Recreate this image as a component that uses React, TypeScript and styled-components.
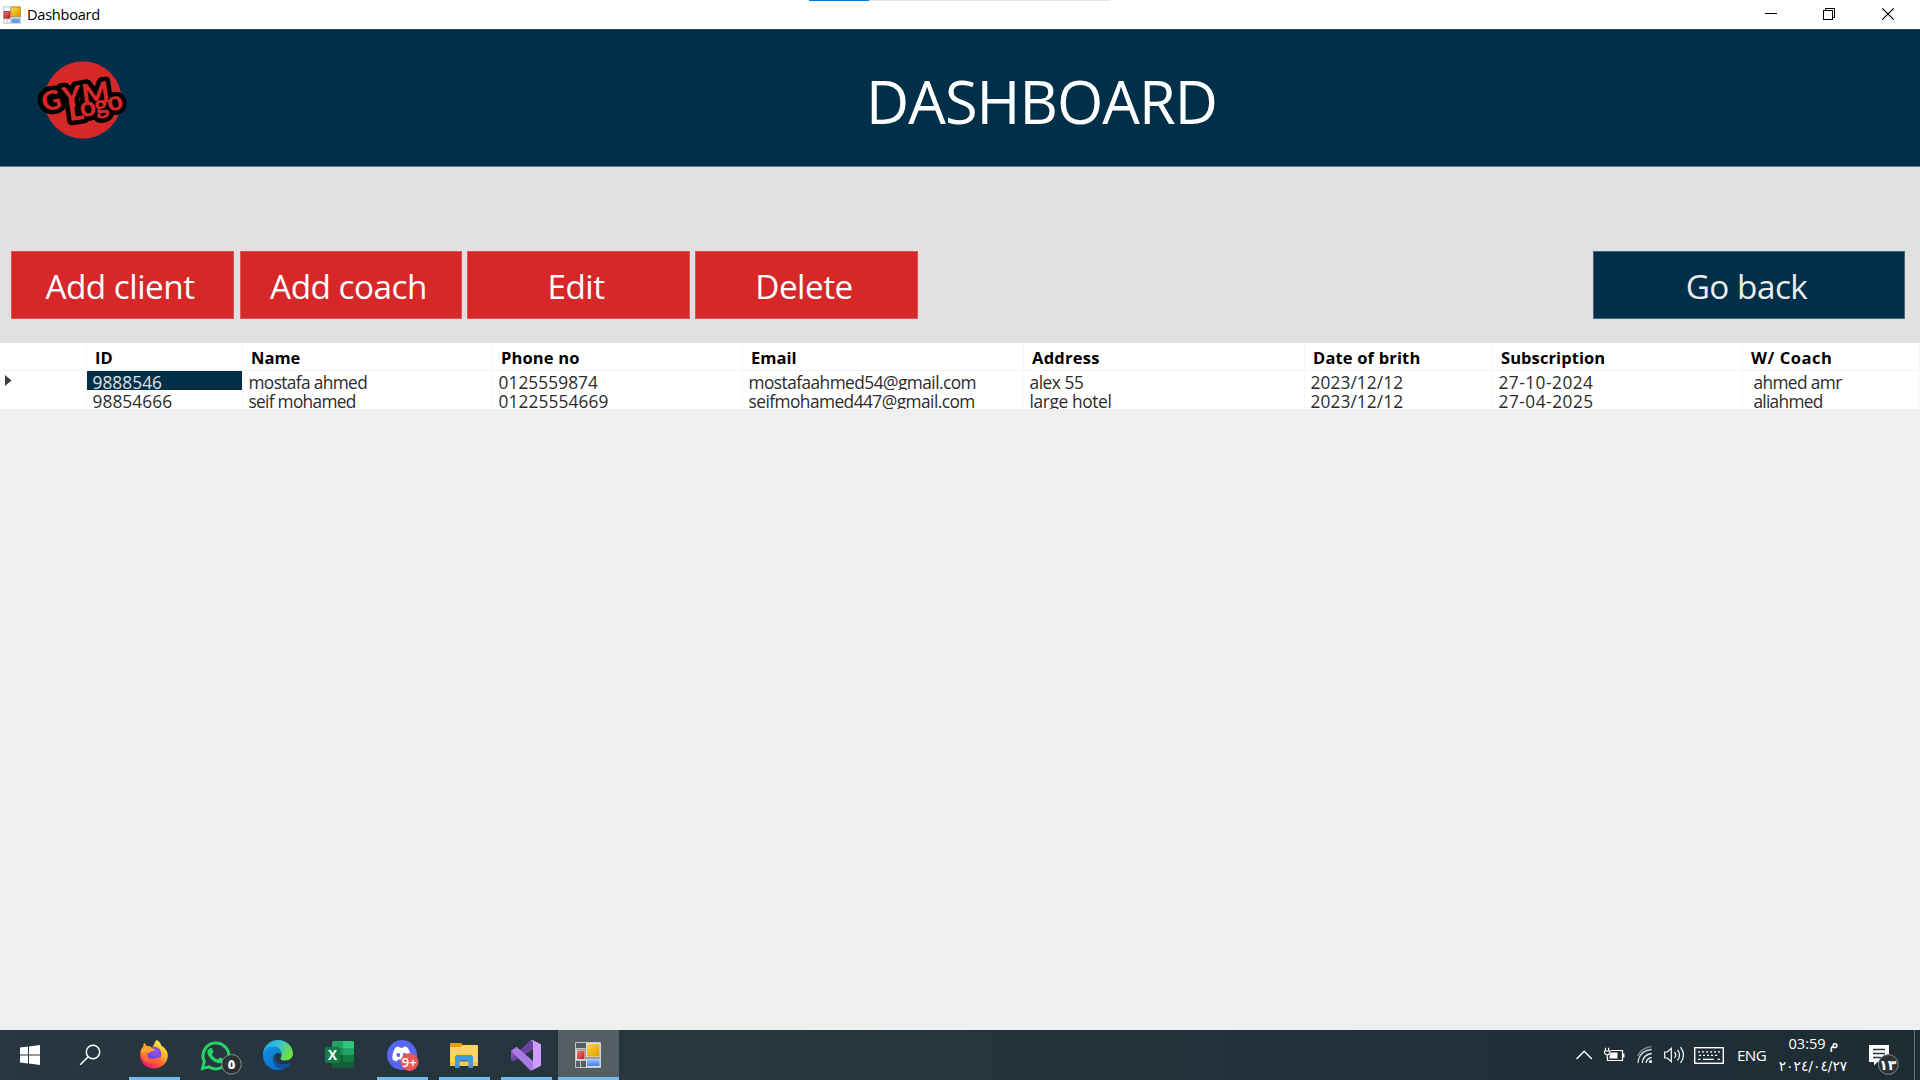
import React from "react";
import styled, { createGlobalStyle } from "styled-components";

const Global = createGlobalStyle`
  * { box-sizing: border-box; }
  body { margin: 0; background: #efefef; font-family: "Open Sans", "Noto Sans", "DejaVu Sans", sans-serif; overflow: hidden; }
  svg { display: block; flex: none; }
`;

const navy = "#003049";
const red = "#d62828";

const Screen = styled.div`
  width: 1920px;
  height: 1080px;
  display: flex;
  flex-direction: column;
  overflow: hidden;
`;

const TitleBar = styled.header`
  position: relative;
  height: 29px;
  flex: none;
  display: flex;
  align-items: center;
  padding-left: 3px;
  background: #fff;
`;

const WindowTitle = styled.span`
  flex: 1;
  margin-left: 6px;
  font-size: 14.6px;
  letter-spacing: -0.27px;
  line-height: 29px;
  color: #000;
`;

const LoadingStrip = styled.div`
  position: absolute;
  left: 809px;
  top: 0;
  width: 301px;
  height: 1px;
  background: linear-gradient(90deg, #0078d7 60px, #e5e5e5 60px);
`;

const Banner = styled.section`
  height: 138px;
  flex: none;
  display: flex;
  background: ${navy};
  border-top: 1px solid #1d4559;
  border-bottom: 1px solid #5d7e8d;
`;

const LogoBox = styled.div`
  width: 152px;
  padding-top: 20px;
`;

const BannerTitle = styled.h1`
  margin: 26px 0 0 714px;
  font-size: 59.5px;
  font-weight: 400;
  line-height: 90px;
  letter-spacing: -0.95px;
  color: #fff;
`;

const Toolbar = styled.section`
  height: 176px;
  flex: none;
  display: flex;
  align-items: flex-start;
  padding: 84px 15px 0 11px;
  background: #e0e0e0;
`;

const Action = styled.button<{ $w: number; $gap?: number; $tone?: string }>`
  width: ${(p) => p.$w}px;
  height: 68px;
  margin: 0 ${(p) => p.$gap ?? 0}px 0 0;
  padding: 2px 0 0;
  border: 1px solid ${(p) => (p.$tone === navy ? "#44687a" : "#d95656")};
  background: ${(p) => p.$tone ?? red};
  color: ${(p) => (p.$tone === navy ? "#ececec" : "#fff")};
  font-family: inherit;
  font-size: 33.3px;
  line-height: 64px;
  letter-spacing: -0.5px;
  text-indent: -5px;
`;

const Spacer = styled.div`
  flex: 1;
`;

const Grid = styled.div`
  flex: none;
  background: #fff;
`;

const columns = "87px 156px 250px 250px 281px 281px 188px 250px 177px";

const HeadRow = styled.div`
  display: grid;
  grid-template-columns: ${columns};
  height: 28px;
  border-bottom: 1px solid #f4f4f4;
`;

const HeadCell = styled.div<{ $ls: number }>`
  padding-left: 8px;
  border-right: 1px solid #f6f6f6;
  font-size: 16.5px;
  font-weight: 700;
  line-height: 29.6px;
  letter-spacing: ${(p) => p.$ls}px;
  white-space: nowrap;
  color: #000;
`;

const Row = styled.div`
  display: grid;
  grid-template-columns: ${columns};
  height: 19px;
`;

const Cell = styled.div<{ $selected?: boolean; $ls?: number; $pad?: number }>`
  height: 19px;
  padding-left: ${(p) => p.$pad ?? 6}px;
  border-right: 1px solid #f8f8f8;
  overflow: hidden;
  font-size: 17.3px;
  line-height: 24px;
  letter-spacing: ${(p) => p.$ls ?? 0}px;
  white-space: nowrap;
  background: ${(p) => (p.$selected ? navy : "#fff")};
  color: ${(p) => (p.$selected ? "#e2e2e2" : "#2b2b2b")};
`;

const Empty = styled.main`
  flex: 1;
  background: #efefef;
`;

const Taskbar = styled.footer`
  height: 50px;
  flex: none;
  display: flex;
  background: linear-gradient(90deg, #26373f 0%, #25353d 30%, #2a383c 34%, #22323a 65%, #1e2c34 100%);
`;

const Slot = styled.div<{ $w?: number; $open?: boolean; $active?: boolean }>`
  width: ${(p) => p.$w ?? 62}px;
  height: 50px;
  margin-left: ${(p) => (p.$active ? 1 : 0)}px;
  background: ${(p) => (p.$active ? "#545f64" : "transparent")};
  display: flex;
  flex-direction: column;
  &::after {
    content: "";
    height: 3px;
    flex: none;
    margin-top: -3px;
    margin-left: ${(p) => (p.$active ? 0 : 6)}px;
    width: ${(p) => (p.$active ? 61 : 51)}px;
    background: ${(p) => (p.$open || p.$active ? "#76b9ed" : "transparent")};
  }
`;

const AppSlotIcon = styled.div`
  height: 50px;
  padding: 12px 0 0 17px;
`;

const Tray = styled.div`
  width: 346px;
  margin-left: auto;
  display: flex;
`;

const TrayGap = styled.div`
  width: 18px;
`;

const Language = styled.span`
  width: 42px;
  margin-left: -1px;
  margin-right: 1px;
  font-size: 15.2px;
  line-height: 51px;
  letter-spacing: -0.6px;
  color: #fff;
`;

const Clock = styled.div`
  width: 66px;
  display: flex;
  flex-direction: column;
  align-items: center;
  color: #fff;
  white-space: nowrap;
`;

const Time = styled.span`
  margin-top: 2px;
  padding-left: 1px;
  font-size: 14.6px;
  line-height: 23px;
  letter-spacing: -0.75px;
`;

const DateText = styled.span`
  font-family: "DejaVu Sans", sans-serif;
  font-size: 13.8px;
  line-height: 22px;
  letter-spacing: -0.55px;
`;

const ShowDesktop = styled.div`
  width: 6px;
  margin-left: auto;
  border-left: 1px solid #6a757b;
`;

const FormIcon = ({ size }: { size: number }) => (
  <svg width={size} height={size} viewBox="0 0 26 26">
    <defs>
      <linearGradient id="fy" x1="0" y1="0" x2="1" y2="1">
        <stop offset="0" stopColor="#fbd75b" />
        <stop offset="0.6" stopColor="#eeb111" />
        <stop offset="1" stopColor="#d99a00" />
      </linearGradient>
      <linearGradient id="fb" x1="0" y1="0" x2="0" y2="1">
        <stop offset="0" stopColor="#9cc4ff" />
        <stop offset="1" stopColor="#3b7be6" />
      </linearGradient>
      <linearGradient id="fr" x1="0" y1="0" x2="1" y2="1">
        <stop offset="0" stopColor="#f08080" />
        <stop offset="1" stopColor="#c01818" />
      </linearGradient>
    </defs>
    {size < 20 ? <rect width="26" height="26" fill="#d3d3d3" /> : <path d="M.5 .5h25v25H.5zM.5 6.5h11M.5 18.500h11M5.500 18v7" fill="none" stroke="#c3c7c9" />}
    {size < 20 && <path d="M2 2h8v6H2zM2 20h3v4H2zM7 20h3v4H7z" fill="#fff" />}
    <rect x="11.500" y="1.500" width="13.500" height="13.500" fill="url(#fy)" stroke={size < 20 ? "#b98500" : "#dedede"} />
    <rect x="1.500" y="8" width="8.500" height="9.500" fill="url(#fr)" stroke={size < 20 ? "#9d1a1a" : "#dedede"} />
    <rect x="11.500" y="17" width="13.500" height="7.500" fill="url(#fb)" stroke="#dedede" />
  </svg>
);

const WindowControls = () => (
  <svg width="155" height="29" viewBox="0 0 155 29" fill="none" stroke="#000" shapeRendering="crispEdges">
    <path d="M0 13.500h12" />
    <path d="M58.500 10.500h9v9h-9zM60.500 10.500v-2h9v9h-2" />
    <path d="M117.300 8.300l11.400 11.400M128.700 8.300L117.300 19.700" shapeRendering="auto" strokeWidth="1.200" />
  </svg>
);

const logoLetters: [string, number, number, number, number][] = [
  ["G", 9.5, 57, 26.5, -14],
  ["Y", 29, 53.5, 29, -8],
  ["M", 48.5, 50.5, 29, -8],
  ["L", 34.5, 66, 30, -8],
  ["o", 46.5, 62.5, 28, -10],
  ["g", 61.5, 60, 26, -12],
  ["o", 74.5, 57, 27, -14],
];

const GymLogo = () => (
  <svg width="152" height="100" viewBox="-34 -5 152 100">
    <circle cx="49" cy="45" r="38.700" fill={red} />
    <g fontFamily="Lato, sans-serif" fontWeight="900" strokeLinejoin="round" transform="translate(.8 0)">
      <g fill="#000" stroke="#000" strokeWidth="9">
        {logoLetters.map(([c, x, y, s, r], i) => (
          <text key={i} fontSize={s} transform={`translate(${x} ${y}) rotate(${r})`}>{c}</text>
        ))}
      </g>
      <g fill={red}>
        {logoLetters.map(([c, x, y, s, r], i) => (
          <text key={i} fontSize={s} transform={`translate(${x} ${y}) rotate(${r})`}>{c}</text>
        ))}
      </g>
    </g>
  </svg>
);

const WindowsIcon = () => (
  <svg width="61" height="50" fill="#fff">
    <path d="M20 17.600l8-1.100v8H20zM29 16.400l11-1.500v9.600H29zM20 25.500h8v8l-8-1.100zM29 25.500h11V35l-11-1.400z" />
  </svg>
);

const SearchIcon = () => (
  <svg width="62" height="50" fill="none" stroke="#fff" strokeWidth="1.400">
    <circle cx="32" cy="22" r="6.700" />
    <path d="M27.200 26.800L19.200 34.800" />
  </svg>
);

const FirefoxIcon = () => (
  <svg width="62" height="50">
    <defs>
      <linearGradient id="ffa" x1="0.850" y1="0.050" x2="0.200" y2="0.950">
        <stop offset="0.050" stopColor="#fff04a" />
        <stop offset="0.350" stopColor="#ffb02a" />
        <stop offset="0.600" stopColor="#ff6a2c" />
        <stop offset="0.850" stopColor="#ff2f55" />
        <stop offset="1" stopColor="#e61587" />
      </linearGradient>
      <radialGradient id="ffb" cx="0.600" cy="0.300" r="0.700">
        <stop offset="0" stopColor="#a050f0" />
        <stop offset="1" stopColor="#5b46d0" />
      </radialGradient>
      <linearGradient id="ffc" x1="0" y1="0" x2="0" y2="1">
        <stop offset="0" stopColor="#ff9a2c" />
        <stop offset="1" stopColor="#ff4f3f" />
      </linearGradient>
    </defs>
    <path d="M34 10c2 1.200 4 3.500 4.300 5.800 2.600 1 6.500 5 6.500 9.500C44.800 33 38.700 38.600 31 38.600S17 32.500 17 25c0-4.500 1.500-7 3.400-8.300l.6-4 2.600 3.400c1.800-.2 3.400.2 4.700 1.100 1.600.1 2-.7 2.700-2.900.7-2 1.500-3.300 3-4.300z" fill="url(#ffa)" />
    <circle cx="31" cy="24" r="7.300" fill="url(#ffb)" />
    <path d="M18 22c1.500-3 4.500-4.500 7.500-3.500l-.7 4.600c-1.200 3 .7 6.200 4.400 6 3-.2 4.500-2 8-1.500-1.500 4-5 6-9 6-5.500 0-10-4.500-10.200-11.600z" fill="url(#ffc)" />
    <path d="M20.400 16.700l.6-4 2.600 3.400c2.500-.2 4.400.8 5.500 2.500 1.500.2 2.700.6 2.800 1.200 0 1.500-4.500 1-5.800 3.500-3.500-2.500-7-1.500-8.300.7.200-3 .8-5.800 2.600-7.300z" fill="#ffa52c" />
  </svg>
);

const WhatsAppIcon = () => (
  <svg width="62" height="50">
    <path d="M17.500 38.500l1.800-7A12.900 12.900 0 1 1 24 36.800z" fill="none" stroke="#25d366" strokeWidth="3" />
    <path d="M24.500 18.500c1.500-1 2.600-.5 3 .7l1 2.600c.2.700-1.700 2-1.500 2.600 1.200 2.400 3 4 5.600 5 .7.200 1.700-2.100 2.500-1.800l3 1.500c.8.500.2 2.300-.8 3.200-1.700 1.500-4.300 1-7-.3-4-2-7.400-6-7.900-9-.2-1.800.7-3.500 2.100-4.500z" fill="#25d366" />
    <circle cx="46.500" cy="34.300" r="9.800" fill="#2c2f32" fillOpacity="0.950" stroke="#8b8f92" />
    <text x="46.500" y="39" textAnchor="middle" fontFamily="DejaVu Sans" fontWeight="700" fontSize="14" fill="#fff">٥</text>
  </svg>
);

const EdgeIcon = () => (
  <svg width="62" height="50">
    <defs>
      <linearGradient id="ea" x1="0" y1="0" x2="1" y2="0.400">
        <stop offset="0" stopColor="#229de2" />
        <stop offset="0.500" stopColor="#35c1dc" />
        <stop offset="1" stopColor="#6ee044" />
      </linearGradient>
      <linearGradient id="eb" x1="0" y1="0" x2="0.400" y2="1">
        <stop offset="0" stopColor="#1690dd" />
        <stop offset="1" stopColor="#0b72d0" />
      </linearGradient>
    </defs>
    <path d="M16 25C16 16 23 10 31 10c9 0 15 6.500 15 13.500 0 4-3 7-7.500 7-3 0-5.500-.9-5-2.300 3-4.500-.5-9.500-6-9.500-6 0-10.500 3-11.500 6.300z" fill="url(#ea)" />
    <path d="M16 25c.7-5.500 6-8.700 11-8.400 5.500.4 8 4.500 7.500 8-2.600-3-8-1.500-8 4C26.500 35 32 38.500 36.500 39c-2 .9-4 1-5.500 1-9 0-15.500-7-15-15z" fill="url(#eb)" />
    <path d="M26.500 25.500c-3 6 2 13.500 9 13.800 3.500-.7 6.500-3 8.300-5.800.4-.9-.3-1.200-1-.7C35 36.500 27 33 27.500 26z" fill="#124f9e" />
  </svg>
);

const ExcelIcon = () => (
  <svg width="62" height="50">
    <path d="M23 12.500q0-1.500 1.500-1.500H34v14.500H23z" fill="#21a366" />
    <path d="M34 11h9.500q1.500 0 1.500 1.500V18H34z" fill="#33c481" />
    <path d="M34 18h11v7H34z" fill="#21a366" />
    <path d="M23 18h11v7H23z" fill="#1b8a53" />
    <path d="M34 25h11v7H34z" fill="#107c41" />
    <path d="M23 25h11v7h11v4.500q0 1.500-1.500 1.500h-19Q23 38 23 36.500z" fill="#185c37" />
    <rect x="16" y="17" width="15" height="16" rx="1.500" fill="#107c41" />
    <text x="23.500" y="30" textAnchor="middle" fontFamily="Open Sans" fontWeight="700" fontSize="13.500" fill="#fff">X</text>
  </svg>
);

const DiscordIcon = () => (
  <svg width="62" height="50">
    <circle cx="31" cy="25" r="15" fill="#5865f2" />
    <path d="M25.500 17.500c1.500-.7 3-.9 3.600-.9l.6 1.200h3.600l.6-1.200c1.200.1 2.500.4 3.600.9 2.500 3.500 3.500 8 3 12-1.500 1.200-3.200 1.900-4.300 2.100l-1.200-2.100h-7l-1.200 2.100c-1.500-.3-3-1-4.300-2.100-.5-4 .5-8.500 3-12z" fill="#fff" transform="translate(-1 0)" />
    <ellipse cx="27.300" cy="25" rx="1.900" ry="2.100" fill="#5865f2" />
    <ellipse cx="33.700" cy="25" rx="1.900" ry="2.100" fill="#5865f2" />
    <circle cx="38.500" cy="32" r="9" fill="#ed5757" />
    <text x="38.300" y="36.500" textAnchor="middle" fontFamily="Open Sans" fontWeight="600" fontSize="13" fill="#fff">9+</text>
  </svg>
);

const FolderIcon = () => (
  <svg width="62" height="50">
    <path d="M17 14q0-1 1-1h10l3 3h-1v4H17z" fill="#e3a008" />
    <path d="M17 17h10.500l3-2H44q1 0 1 1v19q0 1-1 1H17z" fill="#ffd45e" />
    <path d="M17 32h28v3q0 1-1 1H17z" fill="#f8c64a" />
    <path d="M22 37V27q0-2 2-2h14q2 0 2 2v11h-4.500v-8h-9v8H22z" fill="#3f9bdc" />
    <path d="M26.500 30h9v1.500h-9z" fill="#2379bd" />
  </svg>
);

const VisualStudioIcon = () => (
  <svg width="62" height="50">
    <path d="M16 20.500l2.500-1.700 5.700 5.800-5.700 6.700-2.500-1.500z" fill="#7a52b3" />
    <path d="M16 29.500L35.500 10l2.500 1v8.500L18.500 31.200z" fill="#6a45a0" />
    <path d="M18 19.500l3.500-2.800L38 31v9l-2.500.5L16 21z" fill="#a97be4" />
    <path d="M35.500 10l2 0L46 14.200v21.600L37.500 40l-2 .3q2.500-.3 2.500-3V13q0-2.500-2.500-3z" fill="#cf9bff" />
  </svg>
);

const TrayIcons = () => (
  <svg width="164" height="50" viewBox="1574 0 164 50" fill="none" stroke="#fff" strokeWidth="1.400">
    <path d="M1576.500 29l7.700-7.700 7.700 7.700" />
    <path d="M1611 20.500h11.500v10h-15v-3" strokeWidth="1.200" />
    <path d="M1623.700 23.500v4" strokeWidth="1.500" />
    <path d="M1611 22.500h6.500v6h-8v-2.500z" fill="#fff" stroke="none" />
    <path d="M1605.500 17.800v3M1608.700 17.800v3M1604.500 21h5.500v1.500q-.5 2.300-2.800 2.300t-2.700-2.300zM1607.200 25v3" strokeWidth="1.200" />
    <g strokeWidth="1.300">
      <path d="M1646.200 33q.3-4.800 5.500-5.500M1642.300 33q.7-8.500 9.400-9.500" stroke="#e9edef" />
      <path d="M1638 33q.8-12 13.700-13.500" stroke="#c9cfd2" />
      <path d="M1637.500 26q4-8 14-9.500" stroke="#7d888e" />
    </g>
    <circle cx="1650.500" cy="31.500" r="1.600" fill="#fff" stroke="none" />
    <path d="M1664.700 22h2.600l4-3.700v13.400l-4-3.700h-2.600z" strokeWidth="1.200" />
    <path d="M1674.500 22q2.500 3 0 6M1677.500 19.800q4 5 0 10.700M1680.500 17.200q6 7.700 0 15.800" strokeWidth="1.200" />
    <rect x="1694.700" y="17.700" width="28.600" height="15.600" />
    <path d="M1698 21.800h22M1699 25.300h20" strokeDasharray="2 2" strokeWidth="1.200" />
    <path d="M1698 29.300h2.500M1703 29.300h11M1717.500 29.300h2.500" strokeWidth="1.300" />
  </svg>
);

const NotificationIcon = () => (
  <svg width="40" height="50" viewBox="1864 0 40 50">
    <path d="M1869 15h20v17h-11.500l-3.500 3.500V32h-5z" fill="#fff" />
    <path d="M1873 19.500h12M1873 23.500h12M1873 27.500h8" stroke="#22313a" strokeWidth="1.300" />
    <circle cx="1888.300" cy="34.500" r="9.900" fill="#2f3234" stroke="#85898c" />
    <text x="1887.800" y="39.500" textAnchor="middle" fontFamily="DejaVu Sans" fontWeight="700" fontSize="14" letterSpacing="-2" fill="#fff">١٣</text>
  </svg>
);

/* Column captions with their tracking. */
const headers: [string, number][] = [
  ["", 0], ["ID", 0], ["Name", 0], ["Phone no", 0.15], ["Email", 0],
  ["Address", 0.25], ["Date of brith", 0.17], ["Subscription", 0.08], ["W/ Coach", 0.55],
];

/* Each cell holds its text and the tracking it is set with. */
const records: [string, number][][] = [
  [["9888546", 0.05], ["mostafa ahmed", -0.63], ["0125559874", 0.07], ["mostafaahmed54@gmail.com", -0.54], ["alex 55", -0.45], ["2023/12/12", 0.1], ["27-10-2024", 0.48], ["ahmed amr", -0.6]],
  [["98854666", 0.07], ["seif mohamed", -0.7], ["01225554669", 0.12], ["seifmohamed447@gmail.com", -0.53], ["large hotel", -0.35], ["2023/12/12", 0.1], ["27-04-2025", 0.5], ["aliahmed", -0.7]],
];

const App = () => (
  <>
    <Global />
    <Screen>
      <TitleBar>
        <FormIcon size={18} />
        <WindowTitle>Dashboard</WindowTitle>
        <WindowControls />
        <LoadingStrip />
      </TitleBar>
      <Banner>
        <LogoBox><GymLogo /></LogoBox>
        <BannerTitle>DASHBOARD</BannerTitle>
      </Banner>
      <Toolbar>
        <Action $w={223} $gap={6}>Add client</Action>
        <Action $w={222} $gap={5}>Add coach</Action>
        <Action $w={223} $gap={5}>Edit</Action>
        <Action $w={223}>Delete</Action>
        <Spacer />
        <Action $w={312} $tone={navy}>Go back</Action>
      </Toolbar>
      <Grid>
        <HeadRow>
          {headers.map(([label, tracking]) => <HeadCell key={label} $ls={tracking}>{label}</HeadCell>)}
        </HeadRow>
        {records.map((record, r) => (
          <Row key={r}>
            <Cell $pad={5}>
              {r === 0 && <svg width="8" height="19"><path d="M0 4l6.500 5.500L0 15z" fill="#404040" /></svg>}
            </Cell>
            {record.map(([value, tracking], c) => (
              <Cell key={c} $selected={r === 0 && c === 0} $ls={tracking} $pad={c === 7 ? 10.4 : 5.5}>{value}</Cell>
            ))}
          </Row>
        ))}
      </Grid>
      <Empty />
      <Taskbar>
        <Slot $w={61}><WindowsIcon /></Slot>
        <Slot><SearchIcon /></Slot>
        <Slot $open><FirefoxIcon /></Slot>
        <Slot><WhatsAppIcon /></Slot>
        <Slot><EdgeIcon /></Slot>
        <Slot><ExcelIcon /></Slot>
        <Slot $open><DiscordIcon /></Slot>
        <Slot $open><FolderIcon /></Slot>
        <Slot $open><VisualStudioIcon /></Slot>
        <Slot $w={61} $active><AppSlotIcon><FormIcon size={26} /></AppSlotIcon></Slot>
        <Tray>
          <TrayIcons />
          <Language>ENG</Language>
          <Clock>
            <Time>03:59 م</Time>
            <DateText>٢٠٢٤/٠٤/٢٧</DateText>
          </Clock>
          <TrayGap />
          <NotificationIcon />
          <ShowDesktop />
        </Tray>
      </Taskbar>
    </Screen>
  </>
);

export default App;
